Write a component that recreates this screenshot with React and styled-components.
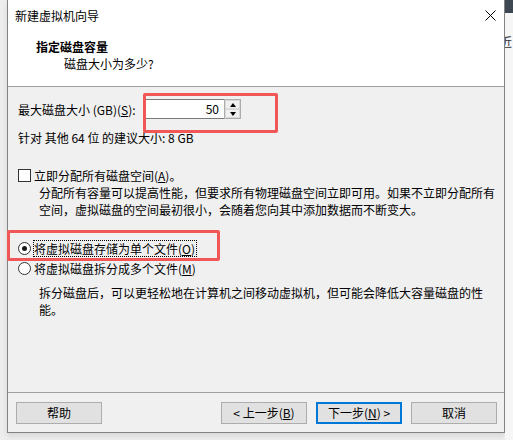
import React from "react";
import styled, { createGlobalStyle } from "styled-components";

const GlobalStyle = createGlobalStyle`
  html, body {
    margin: 0;
    padding: 0;
  }
  body {
    background: #eeeeee;
    font-family: "Noto Sans CJK SC", "Noto Sans", sans-serif;
    font-size: 12px;
    color: #000;
  }
`;

const Screen = styled.div`
  display: flex;
  width: 513px;
  height: 440px;
  overflow: hidden;
  background: #eeeeee;
`;

const Gutter = styled.div`
  width: 7px;
  flex-shrink: 0;
`;

const Wizard = styled.div`
  width: 498px;
  height: 433px;
  flex-shrink: 0;
  box-sizing: border-box;
  border: 1px solid #838383;
  border-top: none;
  background: #f0f0f0;
  display: flex;
  flex-direction: column;
  box-shadow: 0 3px 6px rgba(0, 0, 0, 0.1);
`;

const OtherWindow = styled.div`
  width: 8px;
  flex-shrink: 0;
  display: flex;
  flex-direction: column;
  overflow: hidden;
`;

const OtherTop = styled.div`
  height: 13px;
  background: #3e4852;
`;

const OtherBody = styled.div`
  flex: 1;
  background: #f6f6f6;
  overflow: hidden;
  span {
    display: block;
    margin: 22px 0 0 -5px;
    line-height: 14px;
    color: #333;
  }
`;

const TitleBar = styled.div`
  height: 30px;
  display: flex;
  align-items: center;
  justify-content: space-between;
  padding-left: 7px;
  background: #fff;
`;

const CloseBox = styled.div`
  width: 28px;
  height: 30px;
  display: flex;
  align-items: center;
  justify-content: center;
`;

const Header = styled.div`
  height: 57px;
  box-sizing: border-box;
  padding: 8px 0 0 28px;
  background: #fff;
  border-bottom: 1px solid #a0a0a0;
  line-height: 17px;
`;

const Heading = styled.div`
  font-weight: bold;
`;

const SubHeading = styled.div`
  padding-left: 28px;
`;

const Body = styled.div`
  flex: 1;
  padding: 0 10px;
  display: flex;
  flex-direction: column;
  line-height: 17px;
`;

const SizeRow = styled.div`
  display: flex;
  align-items: center;
  margin-top: 12px;
`;

const SizeLabel = styled.div`
  width: 127px;
  white-space: nowrap;
`;

const Spinner = styled.div`
  position: relative;
  display: flex;
  height: 20px;
`;

const SpinInput = styled.div`
  width: 79px;
  height: 20px;
  box-sizing: border-box;
  background: #fff;
  border: 1px solid #7a7a7a;
  border-left-color: #c8c8c8;
  border-right: none;
  text-align: right;
  padding-right: 5px;
  line-height: 18px;
`;

const SpinButtons = styled.div`
  width: 17px;
  height: 20px;
  box-sizing: border-box;
  border: 1px solid #adadad;
  display: flex;
  flex-direction: column;
  background: #fff;
`;

const SpinButton = styled.div`
  flex: 1;
  background: #f0f0f0;
  border: 1px solid #d9d9d9;
  display: flex;
  align-items: center;
  justify-content: center;
  &::after {
    content: "";
    border-left: 3.5px solid transparent;
    border-right: 3.5px solid transparent;
    ${({ $down }) =>
      $down ? "border-top: 4px solid #000;" : "border-bottom: 4px solid #000;"}
  }
`;

const Highlight = styled.div`
  position: absolute;
  left: ${({ $left }) => $left}px;
  top: ${({ $top }) => $top}px;
  width: ${({ $width }) => $width}px;
  height: ${({ $height }) => $height}px;
  box-sizing: border-box;
  border: 3px solid #f25757;
  border-radius: 2px;
  pointer-events: none;
`;

const Hint = styled.div`
  margin-top: 10px;
  white-space: nowrap;
`;

const OptionRow = styled.div`
  position: relative;
  display: flex;
  align-items: center;
  margin-top: ${({ $gap }) => $gap}px;
  height: 17px;
  white-space: nowrap;
`;

const CheckBox = styled.span`
  width: 13px;
  height: 13px;
  box-sizing: border-box;
  border: 1px solid #333;
  background: #fff;
  margin-right: 3px;
`;

const Radio = styled.span`
  width: 13px;
  height: 13px;
  box-sizing: border-box;
  border: 1px solid #333;
  border-radius: 50%;
  background: #fff;
  margin-right: 2px;
  display: flex;
  align-items: center;
  justify-content: center;
  &::after {
    content: "";
    width: 5px;
    height: 5px;
    border-radius: 50%;
    background: ${({ $checked }) => ($checked ? "#1a1a1a" : "transparent")};
  }
`;

const OptionText = styled.span`
  border: 1px ${({ $focus }) => ($focus ? "dotted #000" : "solid transparent")};
  padding-right: 1px;
  line-height: 15px;
`;

const Desc = styled.div`
  padding-left: 21px;
  margin-top: ${({ $gap }) => $gap || 0}px;
  white-space: nowrap;
`;

const Footer = styled.div`
  height: 40px;
  box-sizing: border-box;
  border-top: 1px solid #a0a0a0;
  padding: 9px 7px 0 8px;
  display: flex;
  gap: 9px;
`;

const Spacer = styled.div`
  flex: 1;
`;

const Button = styled.button`
  width: 86px;
  height: 22px;
  box-sizing: border-box;
  background: #e1e1e1;
  border: ${({ $primary }) =>
    $primary ? "2px solid #0078d7" : "1px solid #adadad"};
  font-family: inherit;
  font-size: 12px;
  color: #000;
  padding: 0;
  line-height: 18px;
`;

function CloseIcon() {
  return (
    <svg width="11" height="11" viewBox="0 0 11 11">
      <path d="M0.5 0.5 L10.5 10.5 M10.5 0.5 L0.5 10.5" stroke="#000" strokeWidth="1" />
    </svg>
  );
}

export default function App() {
  return (
    <>
      <GlobalStyle />
      <Screen>
        <Gutter />
        <Wizard>
          <TitleBar>
            <span>新建虚拟机向导</span>
            <CloseBox>
              <CloseIcon />
            </CloseBox>
          </TitleBar>
          <Header>
            <Heading>指定磁盘容量</Heading>
            <SubHeading>磁盘大小为多少?</SubHeading>
          </Header>
          <Body>
            <SizeRow>
              <SizeLabel>
                最大磁盘大小 (GB)(<u>S</u>):
              </SizeLabel>
              <Spinner>
                <SpinInput>50</SpinInput>
                <SpinButtons>
                  <SpinButton />
                  <SpinButton $down />
                </SpinButtons>
                <Highlight $left={-2} $top={-6} $width={135} $height={40} />
              </Spinner>
            </SizeRow>
            <Hint>针对 其他 64 位 的建议大小: 8 GB</Hint>

            <OptionRow $gap={21}>
              <CheckBox />
              <span>
                立即分配所有磁盘空间(<u>A</u>)。
              </span>
            </OptionRow>
            <Desc>分配所有容量可以提高性能，但要求所有物理磁盘空间立即可用。如果不立即分配所有</Desc>
            <Desc>空间，虚拟磁盘的空间最初很小，会随着您向其中添加数据而不断变大。</Desc>

            <OptionRow $gap={22}>
              <Radio $checked />
              <OptionText $focus>
                将虚拟磁盘存储为单个文件(<u>O</u>)
              </OptionText>
              <Highlight $left={-11} $top={-10} $width={213} $height={31} />
            </OptionRow>
            <OptionRow $gap={3}>
              <Radio />
              <OptionText>
                将虚拟磁盘拆分成多个文件(<u>M</u>)
              </OptionText>
            </OptionRow>
            <Desc $gap={7}>拆分磁盘后，可以更轻松地在计算机之间移动虚拟机，但可能会降低大容量磁盘的性</Desc>
            <Desc>能。</Desc>
          </Body>
          <Footer>
            <Button>帮助</Button>
            <Spacer />
            <Button>
              &lt; 上一步(<u>B</u>)
            </Button>
            <Button $primary>
              下一步(<u>N</u>) &gt;
            </Button>
            <Button>取消</Button>
          </Footer>
        </Wizard>
        <OtherWindow>
          <OtherTop />
          <OtherBody>
            <span>近</span>
          </OtherBody>
        </OtherWindow>
      </Screen>
    </>
  );
}
